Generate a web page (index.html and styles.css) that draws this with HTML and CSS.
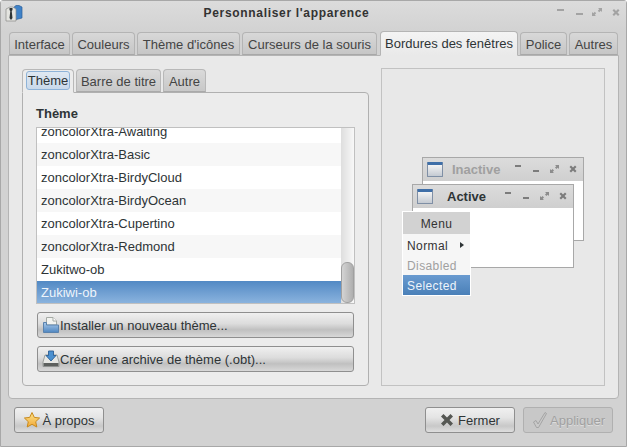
FILE: index.html
```html
<!DOCTYPE html>
<html lang="fr">
<head>
<meta charset="utf-8">
<title>Personnaliser l'apparence</title>
<link rel="stylesheet" href="styles.css">
</head>
<body>
<div class="window">
  <header class="titlebar">
    <svg class="app-icon" width="18" height="18" viewBox="0 0 18 18">
      <path d="M8 4 L11 1.500 H14 L17 3 V14 L9 16 Z" fill="#3f82c8" stroke="#2c5f9a" stroke-width=".7"/>
      <path d="M1 5 L5 3 H8 L11 5 V17 H1 Z" fill="#e4e4e0" stroke="#8a8a86" stroke-width=".7"/>
      <path d="M4.500 4 h3 v2 l-.8 1 .8 7 -1.500 2 -1.500-2 .8-7 -.8-1 Z" fill="#2e3436"/>
    </svg>
    <div class="title">Personnaliser l'apparence</div>
    <div class="wm-buttons">
      <svg width="12" height="12" viewBox="0 0 12 12"><rect x="4" y="2" width="7" height="2" fill="#a3a3a3"/></svg>
      <svg width="12" height="12" viewBox="0 0 12 12"><rect x="4" y="6" width="7" height="2" fill="#a3a3a3"/></svg>
      <svg width="12" height="12" viewBox="0 0 12 12"><path d="M7 1 h4 v4 l-1.300-1.300 -1.500 1.500 -1.400-1.400 1.500-1.500 Z M1 5 v4 h4 l-1.300-1.300 1.500-1.500 -1.400-1.400 -1.500 1.500 Z" fill="#a3a3a3"/></svg>
      <svg width="12" height="12" viewBox="0 0 12 12"><path d="M2.500 3.500 L4 2 6 4 8 2 9.500 3.500 7.500 5.500 9.500 7.500 8 9 6 7 4 9 2.500 7.500 4.500 5.500 Z" fill="#a3a3a3"/></svg>
    </div>
  </header>

  <nav class="tabs outer-tabs">
    <div class="tab t-interface">Interface</div>
    <div class="tab t-couleurs">Couleurs</div>
    <div class="tab t-icones">Thème d'icônes</div>
    <div class="tab t-curseurs">Curseurs de la souris</div>
    <div class="tab tab-active t-bordures">Bordures des fenêtres</div>
    <div class="tab t-police">Police</div>
    <div class="tab t-autres">Autres</div>
  </nav>

  <main class="notebook">
    <section class="left">
      <nav class="tabs inner-tabs">
        <div class="itab itab-active"><span class="focus">Thème</span></div>
        <div class="itab t-barre">Barre de titre</div>
        <div class="itab t-autre">Autre</div>
      </nav>
      <div class="inner-panel">
        <h2 class="heading">Thème</h2>
        <div class="list">
          <div class="rows">
            <div class="row row-cut">zoncolorXtra-Awaiting</div>
            <div class="row">zoncolorXtra-Basic</div>
            <div class="row">zoncolorXtra-BirdyCloud</div>
            <div class="row">zoncolorXtra-BirdyOcean</div>
            <div class="row">zoncolorXtra-Cupertino</div>
            <div class="row">zoncolorXtra-Redmond</div>
            <div class="row">Zukitwo-ob</div>
            <div class="row row-selected">Zukiwi-ob</div>
          </div>
          <div class="scrollbar"><div class="thumb"></div></div>
        </div>
        <button class="btn wide-btn" type="button">
          <svg width="18" height="18" viewBox="0 0 18 18">
            <defs><linearGradient id="fold" x1="0" y1="0" x2="0" y2="1"><stop offset="0" stop-color="#a9c9ea"/><stop offset="1" stop-color="#4f86c0"/></linearGradient></defs>
            <path d="M4.500 1.500 H11 L14.500 5 V9 H4.500 Z" fill="#f2f3f0" stroke="#a5aaa5"/>
            <path d="M11 1.500 V5 H14.500" fill="#fff" stroke="#a5aaa5"/>
            <path d="M1.500 6.500 H4.500 V9 H16.500 V16.500 H1.500 Z" fill="url(#fold)" stroke="#5a82ad"/>
          </svg>
          <span>Installer un nouveau thème...</span>
        </button>
        <button class="btn wide-btn" type="button">
          <svg width="18" height="18" viewBox="0 0 18 18">
            <path d="M3 5 H15 L17 12 V16.500 H1 V12 Z" fill="#e6e7e4" stroke="#8c8f8c" stroke-width=".8"/>
            <rect x="1.500" y="13" width="15" height="3.200" fill="#5d605e"/>
            <path d="M6.500 1 H11.500 V5.500 H14 L9 11 4 5.500 H6.500 Z" fill="#4a90d0" stroke="#2c5f94" stroke-width=".9"/>
          </svg>
          <span>Créer une archive de thème (.obt)...</span>
        </button>
      </div>
    </section>

    <aside class="preview">
      <div class="pv pv-inactive">
        <div class="pv-bar">
          <span class="pv-icon"></span>
          <span class="pv-title">Inactive</span>
          <span class="pv-btns">
            <svg width="12" height="12" viewBox="0 0 12 12"><rect x="1" y="1" width="6" height="2" fill="#7c7c7c"/></svg>
            <svg width="12" height="12" viewBox="0 0 12 12"><rect x="1" y="6" width="6" height="2" fill="#7c7c7c"/></svg>
            <svg width="12" height="12" viewBox="0 0 12 12"><path d="M5 1 h4 v4 l-1.300-1.300 -1.300 1.300 -1.400-1.400 1.300-1.300 Z M0 5 v4 h4 l-1.300-1.300 1.300-1.300 -1.400-1.400 -1.300 1.300 Z" fill="#8c8c8c"/></svg>
            <svg width="12" height="12" viewBox="0 0 12 12"><path d="M1.500 3 L3 1.500 5 3.500 7 1.500 8.500 3 6.500 5 8.500 7 7 8.500 5 6.500 3 8.500 1.500 7 3.500 5 Z" fill="#7c7c7c"/></svg>
          </span>
        </div>
      </div>
      <div class="pv pv-active">
        <div class="pv-bar">
          <span class="pv-icon"></span>
          <span class="pv-title">Active</span>
          <span class="pv-btns">
            <svg width="12" height="12" viewBox="0 0 12 12"><rect x="1" y="1" width="6" height="2" fill="#7c7c7c"/></svg>
            <svg width="12" height="12" viewBox="0 0 12 12"><rect x="1" y="6" width="6" height="2" fill="#7c7c7c"/></svg>
            <svg width="12" height="12" viewBox="0 0 12 12"><path d="M5 1 h4 v4 l-1.300-1.300 -1.300 1.300 -1.400-1.400 1.300-1.300 Z M0 5 v4 h4 l-1.300-1.300 1.300-1.300 -1.400-1.400 -1.300 1.300 Z" fill="#8c8c8c"/></svg>
            <svg width="12" height="12" viewBox="0 0 12 12"><path d="M1.500 3 L3 1.500 5 3.500 7 1.500 8.500 3 6.500 5 8.500 7 7 8.500 5 6.500 3 8.500 1.500 7 3.500 5 Z" fill="#7c7c7c"/></svg>
          </span>
        </div>
      </div>
      <div class="pv-menu">
        <div class="menu-head">Menu</div>
        <div class="menu-item">Normal<span class="menu-arrow"></span></div>
        <div class="menu-item menu-disabled">Disabled</div>
        <div class="menu-item menu-selected">Selected</div>
      </div>
    </aside>
  </main>

  <footer class="footer">
    <button class="btn foot-btn" type="button">
      <svg width="18" height="18" viewBox="0 0 18 18">
        <defs><linearGradient id="star" x1="0" y1="0" x2="0" y2="1"><stop offset="0" stop-color="#fde58a"/><stop offset="1" stop-color="#f2a93a"/></linearGradient></defs>
        <path d="M9 1.500 L11.300 6.400 16.600 7 12.700 10.700 13.800 16 9 13.300 4.200 16 5.300 10.700 1.400 7 6.700 6.400 Z" fill="url(#star)" stroke="#c98a1c"/>
      </svg>
      <span>À propos</span>
    </button>
    <div class="spacer"></div>
    <button class="btn foot-btn" type="button">
      <svg width="14" height="14" viewBox="0 0 14 14"><path d="M1 3.500 L3.500 1 7 4.500 10.500 1 13 3.500 9.500 7 13 10.500 10.500 13 7 9.500 3.500 13 1 10.500 4.500 7 Z" fill="#555753"/></svg>
      <span>Fermer</span>
    </button>
    <button class="btn foot-btn btn-disabled" type="button" disabled>
      <svg width="18" height="18" viewBox="0 0 18 18"><path d="M2.500 11 L5 9.500 7 13 14 1.500 15.500 2.500 7.500 16.500 5.500 16.500 Z" fill="#c9c9c9" stroke="#9a9a9a" stroke-width=".8"/></svg>
      <span>Appliquer</span>
    </button>
  </footer>
</div>
</body>
</html>
```
FILE: styles.css
```css
* { box-sizing: border-box; }
html, body { margin: 0; padding: 0; }
body {
  width: 627px;
  height: 447px;
  overflow: hidden;
  font-family: "Liberation Sans", Arial, sans-serif;
  font-size: 13px;
  color: #2e3436;
}
.window {
  width: 627px;
  height: 447px;
  display: flex;
  flex-direction: column;
  background: #d2d2d2;
  border: 1px solid #a8a8a8;
  border-radius: 3px 3px 0 0;
}
.titlebar {
  height: 30px;
  flex: none;
  display: flex;
  align-items: center;
  padding: 0 4px 6px 4px;
  background: linear-gradient(#dcdcdc, #d2d2d2);
}
.app-icon { flex: none; }
.title {
  flex: 1;
  margin-right: 3px;
  text-align: center;
  font-weight: bold;
  font-size: 12px;
  letter-spacing: .68px;
  color: #333;
}
.wm-buttons {
  display: flex;
  gap: 7px;
}
.tabs { display: flex; align-items: flex-end; }
.outer-tabs {
  height: 24px;
  flex: none;
  padding-left: 8px;
  gap: 2px;
  position: relative;
  z-index: 1;
}
.tab {
  height: 23px;
  padding: 4px 0 0;
  text-align: center;
  line-height: 16px;
  border: 1px solid #b4b4b4;
  border-bottom: 1px solid #a8a8a8;
  border-radius: 4px 4px 0 0;
  background: linear-gradient(#d8d8d8, #c6c6c6);
  color: #444;
}
.t-interface { width: 61px; }
.t-couleurs { width: 63px; }
.t-icones { width: 103px; }
.t-curseurs { width: 135px; }
.t-bordures { width: 138px; }
.t-police { width: 47px; }
.t-autres { width: 49px; }
.tab-active {
  height: 25px;
  margin-left: 1px;
  margin-bottom: -1px;
  padding-top: 4px;
  background: linear-gradient(#f4f4f4, #e9e9e9);
  border-color: #b4b4b4;
  border-bottom-color: #e9e9e9;
  color: #2e3436;
}
.notebook {
  flex: none;
  width: 611px;
  height: 344px;
  margin-left: 7px;
  padding: 12px 14px 12px 13px;
  display: flex;
  gap: 12px;
  background: #e9e9e9;
  border: 1px solid #b4b4b4;
  border-radius: 0 0 4px 4px;
}
.left {
  width: 347px;
  flex: none;
  display: flex;
  flex-direction: column;
}
.inner-tabs {
  height: 24px;
  flex: none;
  gap: 2px;
  position: relative;
  z-index: 1;
}
.itab {
  height: 23px;
  text-align: center;
  line-height: 22px;
  padding-top: 1px;
  border: 1px solid #b8b8b8;
  border-bottom: 1px solid #aaa;
  border-radius: 4px 4px 0 0;
  background: linear-gradient(#dadada, #c8c8c8);
  color: #444;
}
.itab-active {
  width: 52px;
  height: 24px;
  margin-bottom: -1px;
  padding: 1px 2px 0 3px;
  background: #ececec;
  border-bottom-color: #ececec;
  line-height: 16px;
  color: #2e3436;
}
.focus {
  display: block;
  width: 44px;
  height: 19px;
  background: linear-gradient(#dfe8f2, #c9d9ea);
  border: 1px solid #8eb3d8;
  border-radius: 3px;
  line-height: 17px;
}
.t-barre { width: 85px; }
.t-autre { width: 43px; }
.inner-panel {
  flex: 1;
  padding: 13px 13px 12px 13px;
  display: flex;
  flex-direction: column;
  background: #ececec;
  border: 1px solid #b0b0b0;
  border-radius: 0 4px 4px 4px;
}
.heading {
  margin: 0 0 5px;
  height: 16px;
  line-height: 16px;
  font-size: 13px;
  font-weight: bold;
  color: #2e3436;
}
.list {
  height: 177px;
  flex: none;
  display: flex;
  background: #fff;
  border: 1px solid #c0c0c0;
  overflow: hidden;
}
.rows {
  flex: 1;
  min-width: 0;
  display: flex;
  flex-direction: column;
  overflow: hidden;
}
.row {
  height: 23px;
  flex: none;
  line-height: 23px;
  padding-left: 4px;
  color: #2e3436;
  background: #fff;
}
.row:nth-child(even) { background: #f7f7f7; }
.row.row-cut { height: 15px; line-height: 8px; overflow: hidden; }
.row.row-selected {
  background: linear-gradient(#5289c4, #8ab3de);
  color: #eef4fb;
  border-bottom: 1px solid #4a7fb8;
}
.scrollbar {
  width: 13px;
  flex: none;
  position: relative;
  background: linear-gradient(90deg, #dedede, #f8f8f8);
}
.thumb {
  position: absolute;
  left: 0;
  bottom: 0;
  width: 13px;
  height: 41px;
  border: 1px solid #a0a0a0;
  border-radius: 6px;
  background: linear-gradient(90deg, #d4d4d4, #aeaeae);
}
.btn {
  display: flex;
  align-items: center;
  font: inherit;
  color: #2e3436;
  border: 1px solid #8f8f8f;
  border-radius: 3px;
  background: linear-gradient(#f0f0f0 0%, #dcdcdc 45%, #c0c0c0 70%, #d8d8d8 100%);
  padding: 0;
}
.wide-btn {
  width: 317px;
  height: 26px;
  margin-left: 1px;
  margin-top: 8px;
  padding-left: 4px;
}
.footer {
  flex: 1;
  display: flex;
  gap: 8px;
  padding: 8px 13px 0 13px;
  align-items: flex-start;
}
.spacer { flex: 1; }
.foot-btn {
  width: 90px;
  height: 26px;
  justify-content: center;
  gap: 1px;
  background: linear-gradient(#f0f0f0 0%, #e4e4e4 40%, #c8c8c8 75%, #dedede 100%);
}
.foot-btn + .spacer + .foot-btn { gap: 4px; }
.btn-disabled {
  background: #c8c8c8;
  border-color: #b0b0b0;
  color: #a0a0a0;
  text-shadow: 0 1px 0 #dedede;
}
.preview {
  position: relative;
  width: 224px;
  height: 318px;
  flex: none;
  background: #e8e8e8;
  border: 1px solid #c2c2c2;
}
.pv {
  position: absolute;
  width: 162px;
  height: 84px;
  background: #fff;
  border: 1px solid #a8a8a8;
}
.pv-inactive { left: 40px; top: 88px; }
.pv-active { left: 30px; top: 115px; }
.pv-bar {
  height: 23px;
  display: flex;
  align-items: center;
  background: linear-gradient(#dcdcdc, #cfcfcf);
  font-weight: bold;
  font-size: 13px;
  padding-left: 4px;
}
.pv-title { flex: none; }
.pv-inactive .pv-title { color: #a0a0a0; margin-left: 9px; width: 62px; }
.pv-active .pv-title { color: #2e3436; margin-left: 14px; width: 57px; }
.pv-icon {
  width: 16px;
  height: 15px;
  flex: none;
  border: 1px solid #7f8fa5;
  border-top: 3px solid #3f6fa8;
  background: linear-gradient(#f4f4f4, #c4cad2);
  border-radius: 1px;
}
.pv-btns { display: flex; gap: 6px; padding-top: 1px; }
.pv-menu {
  position: absolute;
  left: 20px;
  top: 142px;
  width: 69px;
  height: 85px;
  background: #f6f6f6;
  border: 1px solid #fff;
  font-size: 12px;
  letter-spacing: .4px;
}
.menu-head {
  height: 22px;
  margin-bottom: 1px;
  line-height: 24px;
  text-align: center;
  background: #d2d2d2;
  color: #333;
}
.menu-item {
  height: 20px;
  line-height: 22px;
  padding-left: 4px;
  position: relative;
  color: #333;
}
.menu-disabled { color: #a0a0a0; }
.menu-selected {
  background: linear-gradient(#6a9bd0, #4a80b8);
  color: #eef4fb;
}
.menu-arrow {
  position: absolute;
  right: 6px;
  top: 7px;
  border-left: 4px solid #2e3436;
  border-top: 3px solid transparent;
  border-bottom: 3px solid transparent;
}
```
